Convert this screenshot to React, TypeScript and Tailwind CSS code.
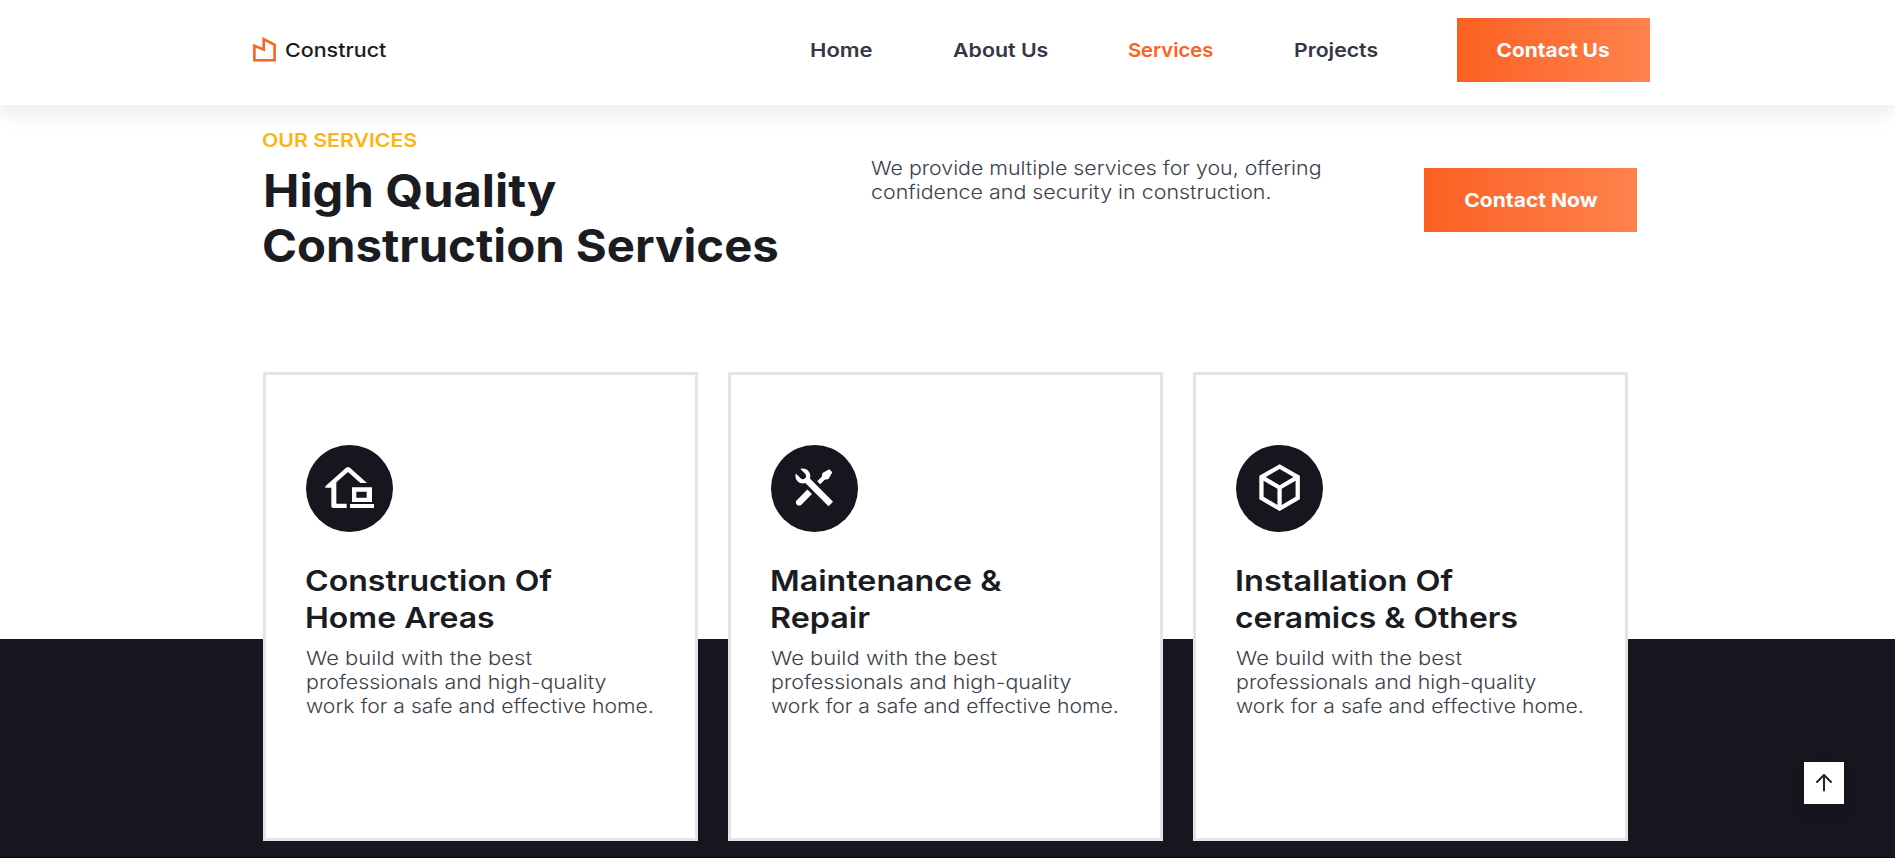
import type { ReactNode } from "react";
import { RiBox3Line, RiToolsFill } from "react-icons/ri";

type Line = { text: string; className: string };

const navItems = [
  { label: "Home", box: "w-[63px] text-[#353744]", stretch: "scale-x-[1.142]" },
  { label: "About Us", box: "w-[95px] text-[#353744]", stretch: "scale-x-[1.11]" },
  { label: "Services", box: "w-[85.5px] text-[#fd6220]", stretch: "scale-x-[1.048]" },
  { label: "Projects", box: "w-[83.5px] text-[#353744]", stretch: "scale-x-[1.103]" },
];

const bodyLines: Line[] = [
  { text: "We build with the best", className: "scale-x-[1.142]" },
  { text: "professionals and high-quality", className: "scale-x-[1.112]" },
  { text: "work for a safe and effective home.", className: "scale-x-[1.1]" },
];

function LogoMark() {
  return (
    <svg width="23" height="26" viewBox="0 0 23 26" fill="none" stroke="#fd6220" strokeWidth="2.6">
      <path d="M1.4 8.7 L10.7 12.6 V2.1 L21.6 7.9 V23.2 H1.4 Z" />
    </svg>
  );
}

function HomeOfficeIcon() {
  return (
    <svg width="87" height="87" viewBox="0 0 261 261" fill="#fff">
      <g transform="translate(42 45)">
        <path d="M16 79 L80 22 H88 L141 69 H121 L84 36 L49 67 V131 H80 V144 H38 L34 140 V83 H16 Z" />
        <path fillRule="evenodd" d="M96 82 H156 V126 H96 Z M109 95 V113 H140 V95 Z" />
        <path d="M90 132 H162 V144 H90 Z" />
      </g>
    </svg>
  );
}

function Lines({ lines }: { lines: Line[] }) {
  return (
    <>
      {lines.map((line) => (
        <span key={line.text} className={`block w-max origin-left whitespace-nowrap ${line.className}`}>
          {line.text}
        </span>
      ))}
    </>
  );
}

function ContactButton({ label, className, stretch }: { label: string; className: string; stretch: string }) {
  return (
    <a
      className={`flex h-16 shrink-0 items-center justify-center bg-linear-to-r from-[#fb6020] to-[#ff824c] text-[19.25px] leading-6 font-bold whitespace-nowrap text-white ${className}`}
    >
      <span className={stretch}>{label}</span>
    </a>
  );
}

function ServiceCard({ icon, title }: { icon: ReactNode; title: Line[] }) {
  return (
    <article className="h-[469px] w-[435px] border-3 border-[#e4e4e6] bg-white pt-[70px] pl-10">
      <div className="flex size-[87px] items-center justify-center rounded-full bg-[#18151f] text-white">
        {icon}
      </div>
      <h3 className="mt-[30px] -ml-px text-[29px] leading-[37px] font-semibold text-[#1b1b22]">
        <Lines lines={title} />
      </h3>
      <p className="mt-2.5 text-[19.25px] leading-6 font-light text-[#3d404c]">
        <Lines lines={bodyLines} />
      </p>
    </article>
  );
}

export default function App() {
  return (
    <div className="flex h-[858px] w-full flex-col overflow-hidden bg-white font-['Inter',sans-serif]">
      <header className="relative z-10 h-[105px] shrink-0 bg-white pt-[18px] shadow-[0_8px_20px_rgba(25,25,46,0.09)]">
        <div className="ml-[253px] flex h-16 w-[1397px] items-center justify-between">
          <a className="flex items-center gap-[9px]">
            <LogoMark />
            <span className="origin-left scale-x-[1.115] text-[19.25px] leading-6 font-medium text-[#1b1b22]">
              Construct
            </span>
          </a>
          <nav className="flex items-center gap-20 text-[19.25px] leading-6 font-semibold whitespace-nowrap">
            {navItems.map((item) => (
              <a key={item.label} className={item.box}>
                <span className={`block w-max origin-left ${item.stretch}`}>{item.label}</span>
              </a>
            ))}
            <ContactButton label="Contact Us" className="w-[193px]" stretch="scale-x-[1.085]" />
          </nav>
        </div>
      </header>

      <main className="flex h-[752px] shrink-0 flex-col bg-linear-to-b from-white from-[534px] to-[#18151f] to-[534px]">
        <section className="ml-[263px] flex h-[267px] w-[1374px] items-start pt-[23px]">
          <div className="w-[608px]">
            <p className="-ml-px w-max origin-left scale-x-[1.105] text-[19.25px] leading-6 font-semibold text-[#fdb515]">
              OUR SERVICES
            </p>
            <h2 className="mt-[11px] text-[45px] leading-[55px] font-bold text-[#1b1b22]">
              <Lines
                lines={[
                  { text: "High Quality", className: "scale-x-[1.083]" },
                  { text: "Construction Services", className: "-ml-px scale-x-[1.052]" },
                ]}
              />
            </h2>
          </div>
          <p className="w-[553px] pt-7 text-[19.25px] leading-6 font-light text-[#3d404c]">
            <Lines
              lines={[
                { text: "We provide multiple services for you, offering", className: "scale-x-[1.108]" },
                { text: "confidence and security in construction.", className: "scale-x-[1.113]" },
              ]}
            />
          </p>
          <div className="pt-10">
            <ContactButton label="Contact Now" className="w-[213px]" stretch="scale-x-[1.095]" />
          </div>
        </section>

        <section className="ml-[263px] flex gap-[30px]">
          <ServiceCard
            icon={<HomeOfficeIcon />}
            title={[
              { text: "Construction Of", className: "scale-x-[1.106]" },
              { text: "Home Areas", className: "scale-x-[1.104]" },
            ]}
          />
          <ServiceCard
            icon={<RiToolsFill className="mb-[1.5px] size-[51.2px]" />}
            title={[
              { text: "Maintenance &", className: "scale-x-[1.11]" },
              { text: "Repair", className: "scale-x-[1.115]" },
            ]}
          />
          <ServiceCard
            icon={<RiBox3Line className="mb-[1.5px] size-[51.2px]" />}
            title={[
              { text: "Installation Of", className: "scale-x-[1.121]" },
              { text: "ceramics & Others", className: "scale-x-[1.1]" },
            ]}
          />
        </section>
      </main>
      <div className="h-px shrink-0 bg-[#0f0410]" />

      <button
        aria-label="Back to top"
        className="fixed right-[51px] bottom-[54px] flex h-[42px] w-10 items-center justify-center bg-white shadow-[0_8px_16px_rgba(20,15,30,0.1)]"
      >
        <svg width="20" height="20" viewBox="0 0 20 20" fill="none" stroke="#24222c" strokeWidth="2" strokeLinecap="round" strokeLinejoin="round">
          <path d="M10 17.5 V2.5 M3 9 L10 2 L17 9" />
        </svg>
      </button>
    </div>
  );
}
